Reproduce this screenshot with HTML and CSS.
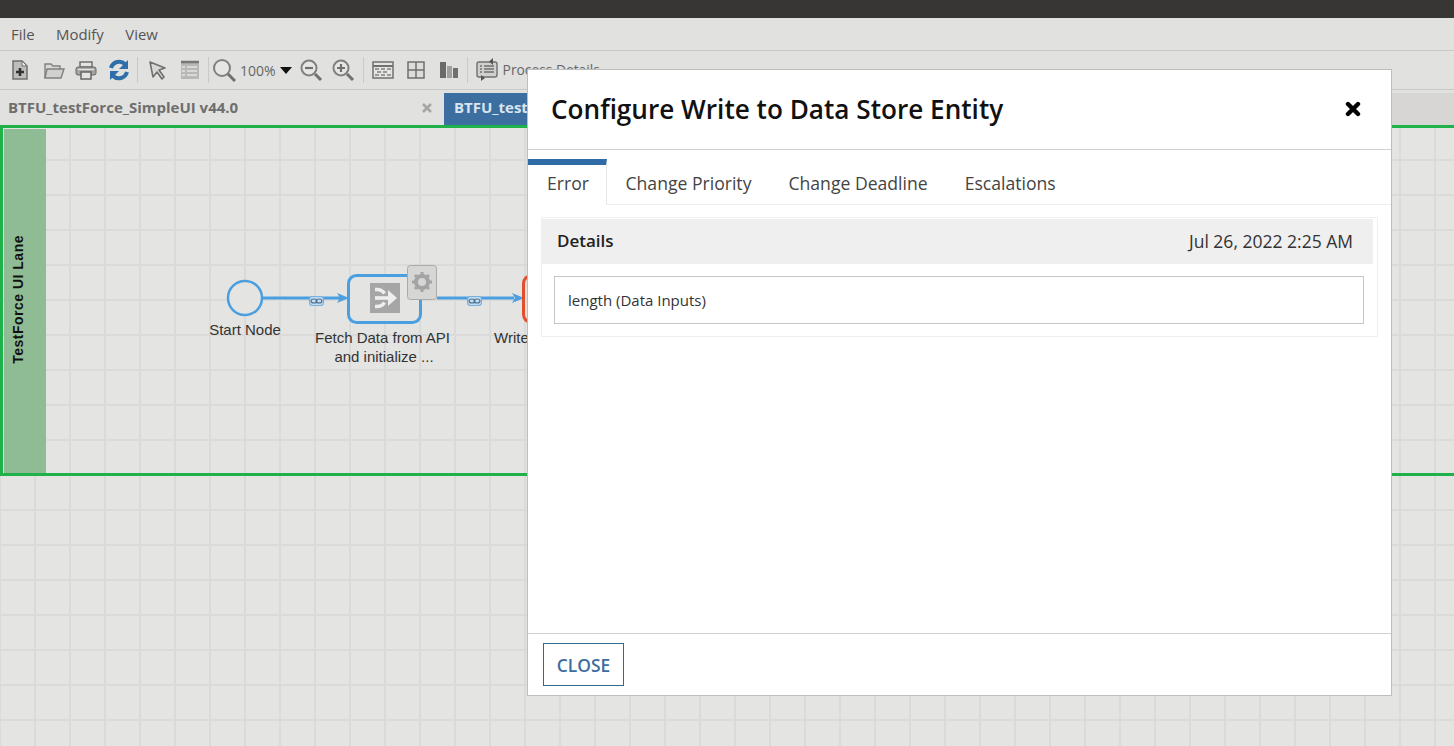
FILE: index.html
```html
<!DOCTYPE html>
<html>
<head>
	<meta charset="UTF-8">
	<title>Process Modeler</title>
	<link rel="stylesheet" href="styles.css">
</head>
<body>
<div class="topbar"></div>

<div class="menubar">
	<span>File</span>
	<span>Modify</span>
	<span>View</span>
</div>

<div class="toolbar">
	<div class="group">
		<svg width="24" height="24" viewBox="0 0 24 24"><path d="M5 3h9l5 5v13H5z" fill="#bdbdbb" stroke="#707070" stroke-width="1.500"/><path d="M14 3v5h5z" fill="#ececea" stroke="#707070"/><path d="M12 10v8M8 14h8" stroke="#333" stroke-width="2.600"/></svg>
		<svg width="24" height="24" viewBox="0 0 24 24"><path d="M4 20V6h6l2 2h7v3" fill="#d8d8d6" stroke="#808080" stroke-width="1.400"/><path d="M4 20l2-9h17l-3 9z" fill="#d0d0ce" stroke="#808080" stroke-width="1.400"/></svg>
		<svg width="24" height="24" viewBox="0 0 24 24"><rect x="6" y="4" width="12" height="5" fill="#e4e4e2" stroke="#707070" stroke-width="1.500"/><rect x="2" y="9" width="20" height="8" rx="2" fill="#a4a4a2" stroke="#666"/><path d="M4 11.500h16" stroke="#e4e4e2" stroke-width="1.200"/><rect x="7" y="14" width="10" height="7" fill="#e4e4e2" stroke="#666" stroke-width="1.500"/></svg>
		<svg width="24" height="24" viewBox="0 0 24 24"><path d="M4 10a8.500 8.500 0 0 1 14-4" fill="none" stroke="#2f6ea8" stroke-width="4"/><path d="M21 2v9h-9z" fill="#2f6ea8"/><path d="M20 14a8.500 8.500 0 0 1-14 4" fill="none" stroke="#2f6ea8" stroke-width="4"/><path d="M3 22v-9h9z" fill="#2f6ea8"/></svg>
	</div>
	<div class="group">
		<svg width="24" height="24" viewBox="0 0 24 24"><path d="M5 4l15 6-6 2 5 7-2 2-5-7-4 5z" fill="#d8d8d6" stroke="#707070" stroke-width="1.600" stroke-linejoin="round"/></svg>
		<svg width="24" height="24" viewBox="0 0 24 24"><rect x="3" y="3" width="18" height="18" fill="#b8b8b6"/><path d="M3 4h18" stroke="#777" stroke-width="2.500"/><path d="M9 9h10M9 13h10M9 17h10M4 9h3M4 13h3M4 17h3" stroke="#e4e4e2" stroke-width="1.500"/></svg>
	</div>
	<div class="group zoom">
		<svg width="24" height="24" viewBox="0 0 24 24"><circle cx="10" cy="10" r="8" fill="#e6e6e4" stroke="#808080" stroke-width="2"/><path d="M16 16l7 7" stroke="#707070" stroke-width="3"/></svg>
		<span class="percent">100%</span>
		<span class="caret"></span>
		<svg width="24" height="24" viewBox="0 0 24 24"><circle cx="10" cy="10" r="7.500" fill="#e6e6e4" stroke="#808080" stroke-width="2"/><path d="M16 16l6 6" stroke="#707070" stroke-width="3"/><path d="M6 10h8" stroke="#707070" stroke-width="2.200"/></svg>
		<svg width="24" height="24" viewBox="0 0 24 24"><circle cx="10" cy="10" r="7.500" fill="#e6e6e4" stroke="#808080" stroke-width="2"/><path d="M16 16l6 6" stroke="#707070" stroke-width="3"/><path d="M6 10h8M10 6v8" stroke="#707070" stroke-width="2.200"/></svg>
	</div>
	<div class="group">
		<svg width="24" height="24" viewBox="0 0 24 24"><rect x="2" y="4" width="20" height="16" fill="#e4e4e2" stroke="#707070" stroke-width="1.500"/><path d="M2 8h20" stroke="#707070" stroke-width="2"/><path d="M4 11h4M10 11h4M16 11h4M6 14h4M12 14h4M4 17h4M10 17h4M16 17h4" stroke="#808080" stroke-width="1.400"/></svg>
		<svg width="24" height="24" viewBox="0 0 24 24"><rect x="4" y="4" width="16" height="16" fill="#dcdcda" stroke="#707070" stroke-width="1.500"/><path d="M12 4v16M4 12h16" stroke="#707070" stroke-width="1.500"/></svg>
		<svg width="24" height="24" viewBox="0 0 24 24"><rect x="3" y="4" width="6" height="16" fill="#6a6a6a"/><rect x="10" y="8" width="5" height="12" fill="#a0a0a0"/><rect x="16" y="10" width="5" height="10" fill="#707070"/></svg>
	</div>
	<div class="group details">
		<svg width="24" height="24" viewBox="0 0 24 24"><rect x="2" y="5" width="20" height="15" rx="2" fill="#d0d0ce" stroke="#707070" stroke-width="1.400"/><path d="M5 9h2M5 12h2M5 15h2M9 9h10M9 12h10M9 15h10" stroke="#707070" stroke-width="1.500"/><path d="M18 1l-4 3.500 4 3.500z" fill="#555"/><path d="M6 18l4 3-4 3z" fill="#555"/></svg>
		<span>Process Details</span>
	</div>
</div>

<div class="tabs">
	<div class="tab first">
		<span>BTFU_testForce_SimpleUI v44.0</span>
		<svg class="tab-x" width="12" height="12" viewBox="0 0 12 12"><path d="M2 2l8 8M10 2l-8 8" stroke="#a6a6a6" stroke-width="2.600"/></svg>
	</div>
	<div class="tab second">BTFU_testForce_SimpleUI</div>
	<div class="tab-rest"></div>
</div>

<div class="canvas">
	<div class="lane">
		<div class="lane-head"><span>TestForce UI Lane</span></div>
	</div>

	<svg class="diagram" width="1454" height="621" viewBox="0 125 1454 621">
		<path d="M262 298H340M437 298H514" stroke="#4a9fe0" stroke-width="3" fill="none"/>
		<path d="M349 298l-12-5 3 5-3 5zM524 298l-12-5 3 5-3 5z" fill="#4a9fe0"/>
		<circle cx="245" cy="298" r="17" fill="#e4e4e2" stroke="#4a9fe0" stroke-width="2.500"/>
		<rect x="348.500" y="275.500" width="72" height="47" rx="8" fill="#e4e4e2" stroke="#4a9fe0" stroke-width="3"/>
		<rect x="370" y="283" width="30" height="30" fill="#a6a6a6"/>
		<path d="M375 289.500h2a9 9 0 0 1 7.500 4M375 306.500h2a9 9 0 0 0 7.500-4" fill="none" stroke="#eee" stroke-width="3.600"/>
		<path d="M375 298h14" stroke="#eee" stroke-width="3.600"/>
		<path d="M388 290l9 8-9 8z" fill="#eee"/>
		<rect x="407.500" y="265.500" width="29" height="34" rx="3" fill="#d6d6d4" stroke="#aaa"/>
		<circle cx="422" cy="282" r="6" fill="none" stroke="#a4a4a4" stroke-width="4"/>
		<path d="M422 272v4M422 288v4M412 282h4M428 282h4M415 275l3 3M426 286l3 3M429 275l-3 3M418 286l-3 3" stroke="#a4a4a4" stroke-width="3"/>
		<rect x="523.500" y="275.500" width="30" height="47" rx="8" fill="#ecdcd6" stroke="#e0502e" stroke-width="3"/>
		<g fill="none" stroke="#4a6f90" stroke-width="1.100">
			<rect x="309.500" y="296.500" width="14" height="9" rx="3" fill="#c4dcf0" stroke="#78b0de"/>
			<ellipse cx="314" cy="301" rx="3" ry="2"/>
			<ellipse cx="319" cy="301" rx="3" ry="2"/>
			<rect x="467.500" y="296.500" width="14" height="9" rx="3" fill="#c4dcf0" stroke="#78b0de"/>
			<ellipse cx="472" cy="301" rx="3" ry="2"/>
			<ellipse cx="477" cy="301" rx="3" ry="2"/>
		</g>
		<text class="node-label" x="245" y="335" text-anchor="middle">Start Node</text>
		<text class="node-label" x="382.500" y="343" text-anchor="middle">Fetch Data from API</text>
		<text class="node-label" x="384" y="362" text-anchor="middle">and initialize ...</text>
		<text class="node-label" x="494" y="343">Write to</text>
	</svg>
</div>

<div class="modal">
	<div class="modal-head">
		<h1>Configure Write to Data Store Entity</h1>
		<svg class="modal-x" width="16" height="16" viewBox="0 0 16 16"><path d="M3 3l10 10M13 3L3 13" stroke="#000" stroke-width="4.400" stroke-linecap="round"/></svg>
	</div>
	<div class="modal-tabs">
		<div class="mtab active">Error</div>
		<div class="mtab">Change Priority</div>
		<div class="mtab">Change Deadline</div>
		<div class="mtab">Escalations</div>
	</div>
	<div class="modal-body">
		<div class="panel">
			<div class="panel-head">
				<b>Details</b>
				<span>Jul 26, 2022 2:25 AM</span>
			</div>
			<div class="panel-box">length (Data Inputs)</div>
		</div>
	</div>
	<div class="modal-foot">
		<button type="button" class="close-btn">CLOSE</button>
	</div>
</div>
</body>
</html>
```

FILE: styles.css
```css
html, body {
	margin: 0;
	height: 100%;
	overflow: hidden;
}
body {
	background-color: #e1e1df;
	font-family: "Open Sans", sans-serif;
	color: #444;
	display: flex;
	flex-direction: column;
	position: relative;
}
.topbar {
	height: 18px;
	background-color: #383634;
}
.menubar {
	height: 32px;
	border-bottom: 1px solid #c9c9c7;
	display: flex;
	align-items: center;
	gap: 21.500px;
	padding-left: 11px;
	font-size: 14.900px;
	color: #555;
}
.toolbar {
	height: 38px;
	border-bottom: 1px solid #c9c9c7;
	display: flex;
	align-items: center;
	padding-left: 8px;
}
.group {
	display: flex;
	align-items: center;
	gap: 9px;
	height: 26px;
	padding-right: 6px;
	margin-right: 7px;
	border-right: 1px solid #c9c9c7;
}
.zoom {
	gap: 0;
	padding-right: 8px;
}
.zoom svg:nth-of-type(1) {
	margin-left: -4px;
}
.zoom svg:nth-of-type(2) {
	margin-left: 7px;
}
.zoom svg:nth-of-type(3) {
	margin-left: 8px;
}
.percent {
	font-size: 14px;
	color: #666;
	margin-left: 4px;
}
.caret {
	border-left: 6px solid transparent;
	border-right: 6px solid transparent;
	border-top: 7px solid #111;
	margin-left: 4px;
}
.details {
	border-right: none;
	gap: 4px;
	font-size: 13.800px;
	color: #666;
	padding-bottom: 2px;
}
.tabs {
	height: 35px;
	display: flex;
	align-items: flex-end;
}
.tab {
	height: 32px;
	line-height: 28px;
	font-size: 15px;
	font-weight: 700;
	box-sizing: border-box;
}
.first {
	width: 444px;
	display: flex;
	justify-content: space-between;
	padding: 0 11px 0 8px;
	color: #6e6e6e;
}
.tab-x {
	margin-top: 9px;
}
.second {
	width: 300px;
	background-color: #3c6e9f;
	color: #d8e4ee;
	padding-left: 10px;
}
.tab-rest {
	flex: 1;
	height: 32px;
	background-color: #d8d6d4;
}
.canvas {
	flex: 1;
	position: relative;
	background-color: #e4e4e2;
	background-image: linear-gradient(#dadad8 2px, transparent 2px), linear-gradient(90deg, #dadad8 2px, transparent 2px);
	background-size: 35px 35px;
	background-position: 34px 34px;
}
.lane {
	height: 351px;
	box-sizing: border-box;
	border-top: 3px solid #1fb24a;
	border-bottom: 3px solid #1fb24a;
	border-left: 3px solid #1fb24a;
	padding: 1px 0 0 1px;
	display: flex;
}
.lane-head {
	width: 42px;
	box-sizing: border-box;
	padding: 0 14px 4px 0;
	background-color: #8fbc94;
	display: flex;
	align-items: center;
	justify-content: center;
}
.lane-head span {
	writing-mode: vertical-rl;
	transform: rotate(180deg);
	font-family: "Liberation Sans", sans-serif;
	font-size: 14px;
	font-weight: 700;
	color: #111;
	letter-spacing: 0.500px;
}
.diagram {
	position: absolute;
	left: 0;
	top: 0;
}
.node-label {
	font-family: "Liberation Sans", sans-serif;
	font-size: 15px;
	fill: #333;
}
.modal {
	position: absolute;
	left: 527px;
	top: 69px;
	width: 865px;
	height: 627px;
	box-sizing: border-box;
	background-color: #fff;
	border: 1px solid #bdbdbd;
	display: flex;
	flex-direction: column;
	color: #333;
}
.modal-head {
	height: 80px;
	box-sizing: border-box;
	border-bottom: 1px solid #d0d0d0;
	display: flex;
	align-items: center;
	justify-content: space-between;
	padding: 0 30px 2px 23px;
}
.modal-head h1 {
	margin: 0;
	font-size: 26.150px;
	font-weight: 600;
	color: #111;
}
.modal-tabs {
	height: 55px;
	box-sizing: border-box;
	padding-top: 9px;
	border-bottom: 1px solid #eee;
	display: flex;
}
.mtab {
	font-size: 17.600px;
	line-height: 36px;
	padding: 6px 18.500px 0;
	color: #444;
}
.mtab.active {
	width: 79px;
	box-sizing: border-box;
	padding: 0 0 0 19px;
	border-top: 6px solid #2f6ca6;
	border-right: 1px solid #e6e6e6;
	background-color: #fff;
	height: 46px;
}
.modal-body {
	flex: 1;
	padding: 12px 13px 0;
}
.panel {
	border: 1px solid #efefef;
	padding: 1px 4px 12px 0;
}
.panel-head {
	height: 45px;
	background-color: #efefef;
	display: flex;
	align-items: center;
	justify-content: space-between;
	padding: 0 20px 2px 15px;
	box-sizing: border-box;
	font-size: 17.500px;
}
.panel-head b {
	font-size: 17px;
	font-weight: 600;
	color: #222;
}
.panel-box {
	margin: 12px 9px 0 12px;
	height: 48px;
	box-sizing: border-box;
	border: 1px solid #c6c6c6;
	padding-left: 13px;
	line-height: 47px;
	font-size: 15px;
}
.modal-foot {
	height: 62px;
	box-sizing: border-box;
	border-top: 1px solid #d0d0d0;
	padding: 9px 15px;
}
.close-btn {
	width: 81px;
	height: 43px;
	background-color: #fff;
	border: 1px solid #2f6c8c;
	font-family: "Open Sans", sans-serif;
	font-size: 17.400px;
	font-weight: 600;
	color: #3d6d9f;
	padding: 0;
}
```
